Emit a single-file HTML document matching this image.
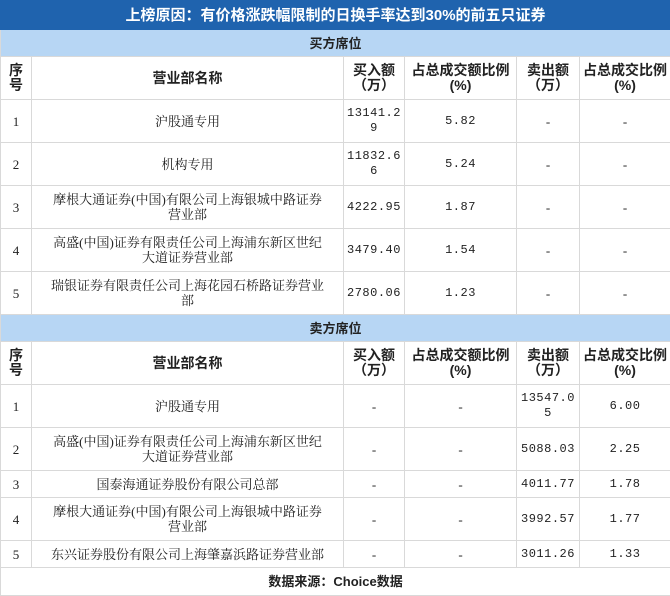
<!DOCTYPE html>
<html><head><meta charset="utf-8"><style>
*{margin:0;padding:0;box-sizing:border-box}
body{width:670px;height:595px;background:#fff;font-family:"Liberation Serif","Noto Serif CJK SC",serif;font-size:13px;color:#222;overflow:hidden}
table{border-collapse:collapse;width:670px;table-layout:fixed}
td{border:1px solid #d9d9d9;text-align:center;vertical-align:middle;line-height:15px;padding:0 2px;word-break:break-all}
td.nm{padding:0 16px}
.t{background:#1f63ae;color:#fff;font-size:15px;font-weight:bold;height:29px;font-family:"Liberation Sans","Noto Sans CJK SC",sans-serif;border-color:#1f63ae}
.s{background:#b7d6f4;font-weight:bold;height:27px;font-family:"Liberation Sans","Noto Sans CJK SC",sans-serif}
.h td{font-weight:bold;height:43px;font-size:14px;font-family:"Liberation Sans","Noto Sans CJK SC",sans-serif;padding:0 1px}
.r td{height:43px}
.r1 td{height:27px}
.n{font-family:"Liberation Mono","Noto Serif CJK SC",monospace;font-size:12px;letter-spacing:0.5px}
.f{font-weight:bold;height:28px;font-family:"Liberation Sans","Noto Sans CJK SC",sans-serif}
</style></head><body>
<table>
<colgroup><col style="width:31px"><col style="width:312px"><col style="width:61px"><col style="width:112px"><col style="width:63px"><col style="width:91px"></colgroup>
<tr><td colspan="6" class="t">上榜原因：有价格涨跌幅限制的日换手率达到30%的前五只证券</td></tr>
<tr><td colspan="6" class="s">买方席位</td></tr>
<tr class="h"><td>序<br>号</td><td>营业部名称</td><td>买入额（万）</td><td>占总成交额比例(%)</td><td>卖出额（万）</td><td>占总成交比例(%)</td></tr>
<tr class="r"><td>1</td><td class="nm">沪股通专用</td><td class="n">13141.29</td><td class="n">5.82</td><td>-</td><td>-</td></tr>
<tr class="r"><td>2</td><td class="nm">机构专用</td><td class="n">11832.66</td><td class="n">5.24</td><td>-</td><td>-</td></tr>
<tr class="r"><td>3</td><td class="nm">摩根大通证券(中国)有限公司上海银城中路证券营业部</td><td class="n">4222.95</td><td class="n">1.87</td><td>-</td><td>-</td></tr>
<tr class="r"><td>4</td><td class="nm">高盛(中国)证券有限责任公司上海浦东新区世纪大道证券营业部</td><td class="n">3479.40</td><td class="n">1.54</td><td>-</td><td>-</td></tr>
<tr class="r"><td>5</td><td class="nm">瑞银证券有限责任公司上海花园石桥路证券营业部</td><td class="n">2780.06</td><td class="n">1.23</td><td>-</td><td>-</td></tr>
<tr><td colspan="6" class="s">卖方席位</td></tr>
<tr class="h"><td>序<br>号</td><td>营业部名称</td><td>买入额（万）</td><td>占总成交额比例(%)</td><td>卖出额（万）</td><td>占总成交比例(%)</td></tr>
<tr class="r"><td>1</td><td class="nm">沪股通专用</td><td>-</td><td>-</td><td class="n">13547.05</td><td class="n">6.00</td></tr>
<tr class="r"><td>2</td><td class="nm">高盛(中国)证券有限责任公司上海浦东新区世纪大道证券营业部</td><td>-</td><td>-</td><td class="n">5088.03</td><td class="n">2.25</td></tr>
<tr class="r1"><td>3</td><td class="nm">国泰海通证券股份有限公司总部</td><td>-</td><td>-</td><td class="n">4011.77</td><td class="n">1.78</td></tr>
<tr class="r"><td>4</td><td class="nm">摩根大通证券(中国)有限公司上海银城中路证券营业部</td><td>-</td><td>-</td><td class="n">3992.57</td><td class="n">1.77</td></tr>
<tr class="r1"><td>5</td><td class="nm">东兴证券股份有限公司上海肇嘉浜路证券营业部</td><td>-</td><td>-</td><td class="n">3011.26</td><td class="n">1.33</td></tr>
<tr><td colspan="6" class="f">数据来源：Choice数据</td></tr>
</table>
</body></html>
